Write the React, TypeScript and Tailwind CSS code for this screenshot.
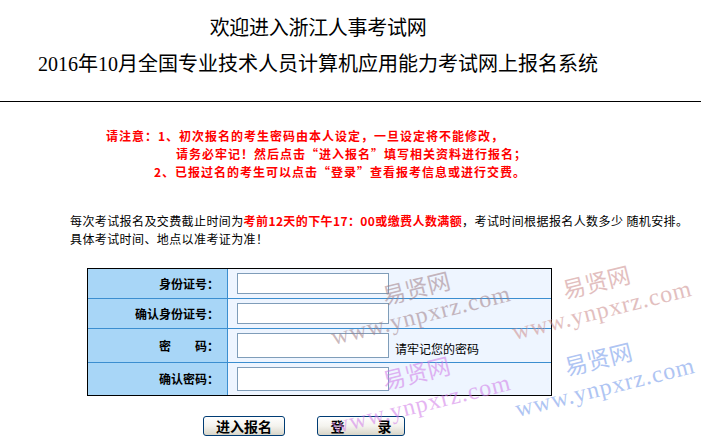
import React from "react";

const cjk = "font-['Noto_Sans_CJK_SC',sans-serif]";

function Mark({
  x,
  y,
  w,
  z,
  color,
}: {
  x: number;
  y: number;
  w: number;
  z: number;
  color: string;
}) {
  return (
    <>
      <div
        className="absolute -translate-x-1/2 -translate-y-1/2 rotate-[-14deg] whitespace-nowrap text-[23px] leading-[26px] font-['Noto_Sans_CJK_SC',serif] pointer-events-none opacity-55"
        style={{ left: x, top: y, color }}
      >
        易贤网
      </div>
      <div
        className="absolute -translate-x-1/2 -translate-y-1/2 rotate-[-14deg] whitespace-nowrap text-[24px] leading-[26px] tracking-[1px] font-['Liberation_Serif',serif] pointer-events-none opacity-55"
        style={{ left: w, top: z, color }}
      >
        www.ynpxrz.com
      </div>
    </>
  );
}

function Row({
  label,
  h,
  border,
  inputH,
  extra,
}: {
  label: React.ReactNode;
  h: string;
  border: boolean;
  inputH: string;
  extra?: string;
}) {
  return (
    <div className={`flex ${h} ${border ? "border-t border-[#3b8ed0]" : ""}`}>
      <div className="w-[140px] shrink-0 bg-[#a8d6f7] border-r border-[#3b8ed0] flex items-center justify-end pr-[8px] text-[12px] font-bold text-black">
        {label}
      </div>
      <div className="flex-1 bg-[#eef5ff] pl-[9px] flex items-center">
        <div className="flex items-end">
          <input
            className={`w-[152px] ${inputH} bg-white border border-[#7f9db9] outline-none`}
          />
          {extra && (
            <span className="ml-[6px] text-[12px] leading-[16px] pb-[1px] text-black">
              {extra}
            </span>
          )}
        </div>
      </div>
    </div>
  );
}

export default function App() {
  return (
    <div className={`relative w-[701px] h-[445px] bg-white overflow-hidden ${cjk}`}>
      {/* header */}
      <div className="w-[636px] h-[101px] text-center text-black font-['Liberation_Serif','Noto_Sans_CJK_SC',serif] text-[20px] leading-[24px]">
        <div className="pt-[16px] tracking-[-0.3px]">欢迎进入浙江人事考试网</div>
        <div className="mt-[12px]">2016年10月全国专业技术人员计算机应用能力考试网上报名系统</div>
      </div>
      <div className="h-px bg-black w-full" />

      {/* notice */}
      <div className="pt-[25px] text-[12px] leading-[18px] font-bold text-[#ff0000] tracking-[1px]">
        <div className="ml-[106px]">请注意：1、初次报名的考生密码由本人设定，一旦设定将不能修改，</div>
        <div className="ml-[176px]">请务必牢记！然后点击“进入报名”填写相关资料进行报名；</div>
        <div className="ml-[154px]">2、已报过名的考生可以点击“登录”查看报考信息或进行交费。</div>
      </div>

      {/* paragraph */}
      <div className="mt-[31px] ml-[70px] text-[12px] leading-[18px] text-black tracking-[0.4px]">
        <div>
          每次考试报名及交费截止时间为
          <span className="text-[#ff0000] font-bold">考前12天的下午17：00或缴费人数满额</span>
          ，考试时间根据报名人数多少 随机安排。
        </div>
        <div>具体考试时间、地点以准考证为准！</div>
      </div>

      {/* form table */}
      <div className="mt-[20px] ml-[87px] w-[465px] border border-black">
        <Row label="身份证号：" h="h-[29px]" border={false} inputH="h-[21px]" />
        <Row label="确认身份证号：" h="h-[30px]" border inputH="h-[21px]" />
        <Row
          label={
            <span className="flex">
              <span>密</span>
              <span className="ml-[24px]">码：</span>
            </span>
          }
          h="h-[34px]"
          border
          inputH="h-[25px]"
          extra="请牢记您的密码"
        />
        <Row label="确认密码：" h="h-[33px]" border inputH="h-[24px]" />
      </div>

      {/* buttons */}
      <div className="mt-[20px] flex">
        <button className="ml-[203px] w-[82px] h-[20px] border border-[#003c74] rounded-[3px] bg-linear-to-b from-white via-[#f4f3ee] to-[#d8d5c8] text-[14px] leading-[18px] font-bold text-black flex items-center justify-center">
          进入报名
        </button>
        <button className="ml-[32px] w-[88px] h-[20px] border border-[#003c74] rounded-[3px] bg-linear-to-b from-white via-[#f4f3ee] to-[#d8d5c8] text-[14px] leading-[18px] font-bold text-black flex items-center justify-center">
          <span>登</span>
          <span className="ml-[33px]">录</span>
        </button>
      </div>

      {/* watermarks */}
      <Mark x={416} y={287} w={421} z={315} color="#a08088" />
      <Mark x={596} y={281} w={602} z={310} color="#cc8c8c" />
      <Mark x={416} y={372} w={421} z={404} color="#d07ae8" />
      <Mark x={598} y={358} w={605} z={387} color="#6f96ea" />
    </div>
  );
}
